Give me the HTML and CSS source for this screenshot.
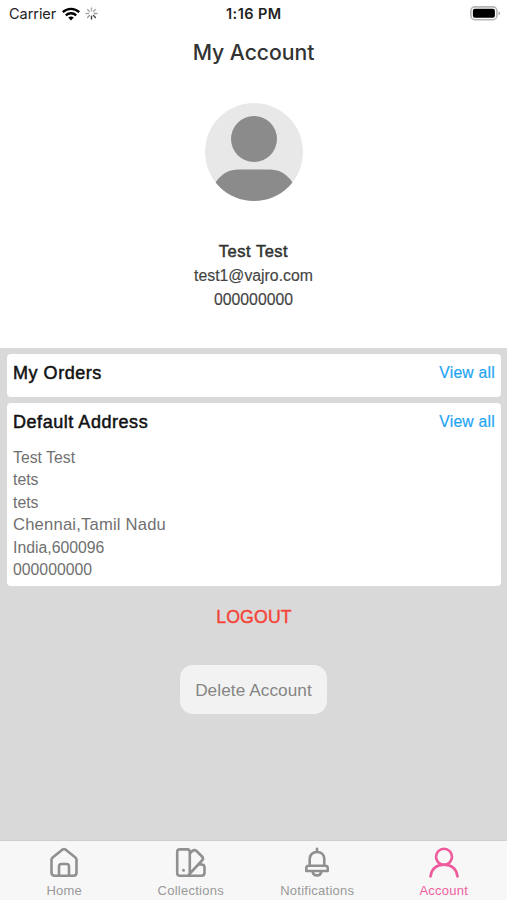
FILE: index.html
```html
<!DOCTYPE html>
<html lang="en">
<head>
<meta charset="utf-8">
<title>My Account</title>
<link rel="stylesheet" href="styles.css">
</head>
<body>
<div class="screen">
  <header class="status">
    <div class="carrier">
      <span>Carrier</span>
      <svg class="wifi" width="18" height="14" viewBox="0 0 18 14" fill="none" stroke="#000" stroke-width="2.4"><path d="M.8 5.2C5.5 .7 12.500 .7 17.200 5.200M3.800 8.300c3-2.800 7.400-2.800 10.400 0"/><path d="M6.200 10.500c1.700-1.500 3.900-1.500 5.600 0L9 13.400z" fill="#000" stroke="none"/></svg>
      <svg class="spinner" width="13" height="13" viewBox="-6.500 -6.500 13 13" stroke-width="1.400" stroke-linecap="round"><path stroke="#aaa" d="M0-2.800V-5.500M2-2L3.900-3.900M-2-2L-3.900-3.900M-2.800 0H-5.500"/><path stroke="#999" d="M2.800 0H5.500M-2 2L-3.900 3.900"/><path stroke="#444" d="M2 2L3.900 3.900M0 2.800V5.500"/></svg>
    </div>
    <div class="time">1:16 PM</div>
    <svg class="battery" width="31" height="15" viewBox="0 0 31 15"><rect x=".9" y=".9" width="26" height="12.800" rx="4" fill="#fff" stroke="#b5b5b5" stroke-width="1.600"/><rect x="2.900" y="2.800" width="22" height="9" rx="2" fill="#000"/><path d="M28.500 5.200c2.300 1 2.300 3.200 0 4.200z" fill="#aaa"/></svg>
  </header>
  <h1 class="title">My Account</h1>
  <section class="profile">
    <svg class="avatar" width="98" height="98" viewBox="0 0 98 98"><defs><clipPath id="disc"><circle cx="49" cy="49" r="49"/></clipPath></defs><circle cx="49" cy="49" r="49" fill="#e8e8e8"/><g clip-path="url(#disc)" fill="#8b8b8b"><circle cx="49" cy="36" r="23"/><path d="M5 90C11 75 20 66.500 33 66.500H65C78 66.500 87 75 93 90V100H5z"/></g></svg>
    <div class="name">Test Test</div>
    <div class="contact">test1@vajro.com</div>
    <div class="contact">000000000</div>
  </section>
  <main class="content">
    <section class="card orders">
      <div class="card-head"><h2>My Orders</h2><a class="link">View all</a></div>
    </section>
    <section class="card address">
      <div class="card-head"><h2>Default Address</h2><a class="link">View all</a></div>
      <div class="lines">
        <div>Test Test</div>
        <div>tets</div>
        <div>tets</div>
        <div class="city">Chennai,Tamil Nadu</div>
        <div>India,600096</div>
        <div>000000000</div>
      </div>
    </section>
    <div class="logout">LOGOUT</div>
    <button class="delete">Delete Account</button>
  </main>
  <nav class="tabs">
    <div class="tab"><svg width="32" height="32" viewBox="0 0 32 32"><path d="M3.500 12.800Q3.500 11.400 4.600 10.500L14.600 2.600Q16 1.500 17.400 2.600L27.400 10.500Q28.500 11.400 28.500 12.800V25.500Q28.500 28.700 25.300 28.700H6.700Q3.500 28.700 3.500 25.500zM11 28.700V19.500Q11 17 13.500 17H18.500Q21 17 21 19.500V28.700"/></svg><span>Home</span></div>
    <div class="tab"><svg width="32" height="32" viewBox="0 0 32 32"><path d="M4.700 2.400H12.300Q14.800 2.400 14.800 4.900V26.200Q14.800 28.700 12.300 28.700H4.700Q2.200 28.700 2.200 26.200V4.900Q2.200 2.400 4.700 2.400M14.800 6.500L17.300 4Q19.500 2.200 21.500 4L27 9.500Q29 11.500 27 13.500L13.500 28M12.300 28.700H26.500Q29.500 28.700 29.500 25.700V20.500Q29.500 17.500 26.500 17.500H23.500"/><circle cx="8.500" cy="23.300" r="1.500" class="dot"/></svg><span>Collections</span></div>
    <div class="tab"><svg width="32" height="32" viewBox="0 0 32 32"><path d="M16 1.800V5M8.700 18.800V12.300C8.700 7.900 11.500 5 16 5S23.300 7.900 23.300 12.300V18.800M7.500 18.800H24.500Q26.700 18.800 26.700 21V24H5.300V21Q5.300 18.800 7.500 18.800zM11.500 24.200C12 27.200 13.500 28.400 16 28.400S20 27.200 20.500 24.200"/></svg><span>Notifications</span></div>
    <div class="tab active"><svg width="32" height="32" viewBox="0 0 32 32"><circle cx="16" cy="9.800" r="8"/><path d="M2.500 29.500C3.600 21.500 8.700 17.800 16 17.800S28.400 21.500 29.500 29.500"/></svg><span>Account</span></div>
  </nav>
</div>
</body>
</html>
```
FILE: styles.css
```css
* { box-sizing: border-box; }
body { margin: 0; font-family: "Liberation Sans", Arial, sans-serif; }
h1, h2 { margin: 0; font-weight: 400; }
.screen { width: 507px; height: 900px; display: flex; flex-direction: column; background: #fff; overflow: hidden; }
.status { height: 28px; padding: 0 6px 0 9px; display: grid; grid-template-columns: 217px auto 1fr; align-items: center; font-family: Inter, sans-serif; color: #222; }
.carrier { display: flex; align-items: center; margin-top: -1px; font-size: 14.500px; letter-spacing: -.05px; }
.wifi { margin-left: 6px; }
.spinner { margin-left: 5px; }
.time { margin-top: -1px; font-size: 14.500px; font-weight: 600; letter-spacing: .45px; }
.battery { justify-self: end; margin-top: -1px; }
.title { height: 48px; text-align: center; font: 500 21.200px/49px Inter, sans-serif; letter-spacing: -.05px; color: #333; }
.profile { height: 272px; padding-top: 27px; display: flex; flex-direction: column; align-items: center; color: #444; }
.avatar { flex: none; margin-bottom: 38px; }
.name { font-size: 16.500px; line-height: 24px; letter-spacing: .5px; color: #333; -webkit-text-stroke: .5px #333; }
.contact { position: relative; top: 1px; font-size: 15.800px; line-height: 24px; -webkit-text-stroke: .15px #444; }
.content { height: 492px; padding: 6px 6px 0 7px; background: #d9d9d9; display: flex; flex-direction: column; align-items: center; }
.card { width: 100%; padding: 0 6px; background: #fff; border-radius: 4px; }
.orders { height: 43px; margin-bottom: 6px; }
.address { height: 183px; }
.card-head { display: flex; justify-content: space-between; line-height: 38px; }
.card-head h2 { font-size: 18px; letter-spacing: .54px; color: #111; -webkit-text-stroke: .5px #111; }
.link { height: 38px; font-size: 15.700px; letter-spacing: .25px; color: #1ea5f2; -webkit-text-stroke: .2px #1ea5f2; }
.lines { padding-top: 6px; font-size: 15.800px; line-height: 22.400px; color: #707070; }
.city { font-size: 16.600px; letter-spacing: .2px; }
.logout { margin-top: 19px; font-size: 17.700px; line-height: 24px; letter-spacing: .15px; color: #f44336; -webkit-text-stroke: .4px #f44336; }
.delete { width: 147px; height: 49px; margin: 36px 1px 0 0; padding: 2px 0 0; border: 0; border-radius: 13px; background: #f2f2f2; color: #858585; font: 17.200px "Liberation Sans", Arial, sans-serif; letter-spacing: .08px; }
.tabs { height: 60px; padding-left: 1px; border-top: 1px solid #cfcfcf; background: #f7f7f7; display: grid; grid-template-columns: repeat(4, 1fr); }
.tab { display: flex; flex-direction: column; align-items: center; padding-top: 6px; font-size: 13px; letter-spacing: .25px; line-height: 18px; color: #999; }
.tab svg { fill: none; stroke: #909090; stroke-width: 2.600; stroke-linecap: round; stroke-linejoin: round; margin-bottom: 3px; }
.tab .dot { fill: #909090; stroke: none; }
.active { color: #ee609f; }
.active svg { stroke: #ee5a9b; }
```
